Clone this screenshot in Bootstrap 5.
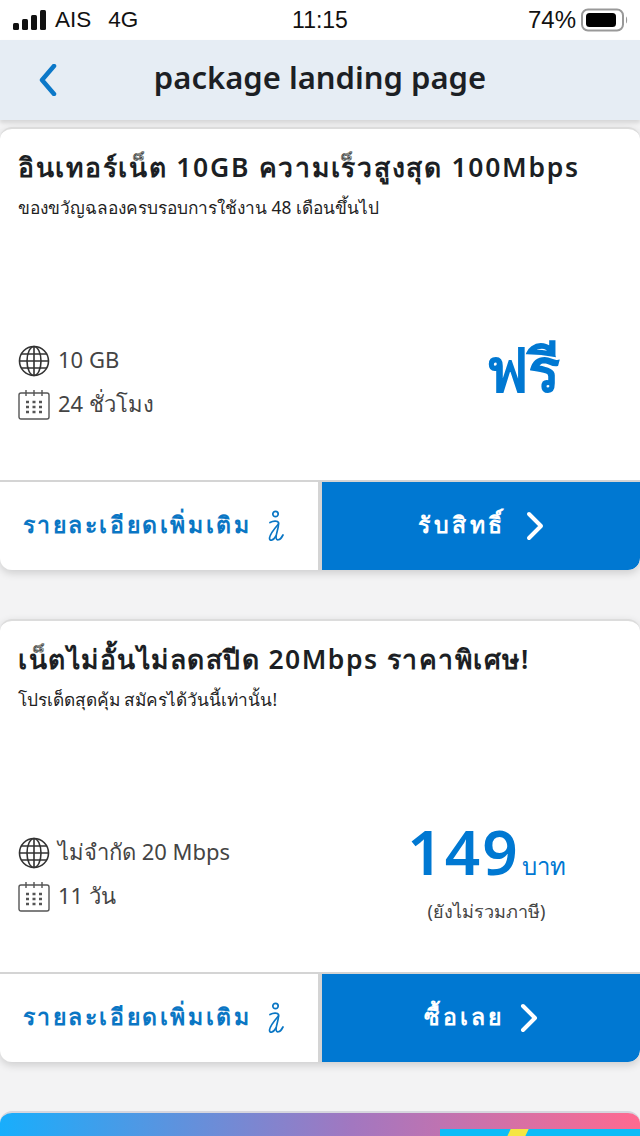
<!DOCTYPE html>
<html lang="th">
<head>
<meta charset="utf-8">
<title>package landing page</title>
<link rel="stylesheet" href="https://cdn.jsdelivr.net/npm/bootstrap@5.3.0/dist/css/bootstrap.min.css">
<style>
html,body{height:1136px;overflow:hidden}
body{background:#f3f3f4;font-family:"Noto Sans","Liberation Sans",sans-serif;color:#3c3c3c}
.status-bar{height:40px;background:#fff;padding:0 12px 0 13px;color:#111;font-family:"Liberation Sans",sans-serif;font-size:22.500px;position:relative}
.status-carrier{margin-left:9px}
.status-net{margin-left:17px}
.status-pct{font-size:24px;margin-right:5px;position:relative}
.status-time{position:absolute;left:0;right:0;top:0;height:40px;line-height:40px;text-align:center;font-weight:500;font-size:23px}
.head-bar{height:80px;background:#e6edf4;position:relative;box-shadow:0 3px 4px rgba(0,0,0,.12)}
.head-title{font-size:31px;font-weight:600;color:#1c1f24;line-height:70px;text-align:center;margin:0 0 6px;width:100%}
.head-back{position:absolute;left:38px;top:24px}
.pk-list{padding-top:7px;display:flex;flex-direction:column;gap:49px}
.pk-card{height:443px;background:#fff;border:0;border-top:2px solid #dcdcdc;border-radius:12px;box-shadow:0 3px 8px rgba(0,0,0,.16);overflow:hidden;display:flex;flex-direction:column}
.pk-body{flex:1;padding:18px 18px 0;position:relative;display:flex;flex-direction:column;min-height:0}
.pk-title{font-size:26.500px;font-weight:600;color:#1c1f24;letter-spacing:1.500px;line-height:40px;margin:0;white-space:nowrap}
.pk-title-wide{letter-spacing:1.730px}
.pk-sub{font-size:17.300px;line-height:24px;margin:9px 0 0;color:#222;white-space:nowrap}
.pk-info{flex:1;display:flex;align-items:flex-start;min-height:0;padding-top:117px}
.pk-specs{width:345px;font-size:22px;color:#444;line-height:44px;flex:none}
.pk-spec{height:44px}
.pk-spec svg{margin-top:4px}
.pk-price{flex:1;text-align:center;color:#0078d2}
.pk-price-free{padding-left:60px;margin-top:-3px;font-size:60px;font-weight:600;line-height:70px}
.pk-price-paid{margin-top:-13px;padding-right:12px}
.pk-num{font-size:62px;font-weight:600;letter-spacing:2px;line-height:70px}
.pk-unit{font-size:24px;font-weight:500;margin-left:-2px}
.pk-note{font-size:18px;color:#444;line-height:26px;margin-top:12px}
.pk-foot{height:90px;display:flex;background:#d4d4d4;padding-top:2px;gap:4px;flex:none}
.pk-btn{width:318px;flex:none;border:0;border-radius:0;font-size:23px;font-weight:600;letter-spacing:2.600px;display:flex;align-items:center;justify-content:center;padding:0 0 4px}
.pk-btn svg{position:relative;top:2px}
.pk-more{background:#fff;color:#0a76c4;gap:14px;padding-right:12px}
.pk-go{flex:1;width:auto;background:#0078d2;color:#fff;gap:20px;border-bottom-right-radius:12px}
.pk-go-wide{letter-spacing:3.600px}
.pk-go-tight{letter-spacing:3px;gap:16px}
.promo{height:60px;border-radius:12px 12px 0 0;background:linear-gradient(90deg,#18aefc,#a277c0 55%,#ff6a90);border-top:2px solid #d6d6de;position:relative;overflow:hidden}
.promo-tile{position:absolute;left:440px;right:0;top:16px;bottom:0;background:#0dbcf7}
.promo-bolt{position:absolute;left:506px;top:16px;width:18px;height:20px;background:#f5e642;transform:skewX(-25deg)}
</style>
</head>
<body>
<div class="status-bar d-flex align-items-center">
  <svg width="33" height="20" viewBox="0 0 33 20"><g fill="#111"><rect x="0" y="13" width="6" height="7" rx="1.5"/><rect x="9" y="9" width="6" height="11" rx="1.5"/><rect x="18" y="5" width="6" height="15" rx="1.5"/><rect x="27" y="0" width="6" height="20" rx="1.5"/></g></svg>
  <span class="status-carrier">AIS</span><span class="status-net">4G</span>
  <div class="status-time">11:15</div>
  <span class="ms-auto status-pct">74%</span>
  <svg width="47" height="24" viewBox="0 0 47 24" class="position-relative"><rect x="1" y="1.500" width="41" height="21" rx="6" fill="none" stroke="#999" stroke-width="2"/><rect x="5" y="5" width="30" height="14" rx="3.500" fill="#000"/><path d="M45 8.500c1.500.8 1.500 6.200 0 7z" fill="#999"/></svg>
</div>
<div class="head-bar d-flex align-items-center">
  <svg class="head-back" width="20" height="32" viewBox="0 0 20 32"><path d="M16 2 4 16l12 14" fill="none" stroke="#0c78c8" stroke-width="4.500" stroke-linecap="round" stroke-linejoin="round"/></svg>
  <h1 class="head-title">package landing page</h1>
</div>
<div class="pk-list">
  <div class="pk-card">
    <div class="pk-body">
      <h2 class="pk-title pk-title-wide">อินเทอร์เน็ต 10GB ความเร็วสูงสุด 100Mbps</h2>
      <p class="pk-sub">ของขวัญฉลองครบรอบการใช้งาน 48 เดือนขึ้นไป</p>
      <div class="pk-info">
        <div class="pk-specs">
          <div class="pk-spec d-flex align-items-center gap-2">
            <svg width="32" height="32" viewBox="0 0 32 32" fill="none" stroke="#333" stroke-width="1.600"><circle cx="16" cy="16" r="14.500"/><ellipse cx="16" cy="16" rx="7" ry="14.500"/><path d="M16 1.500v29M1.500 16h29M3.500 9h25M3.500 23h25"/></svg>
            <span>10 GB</span>
          </div>
          <div class="pk-spec d-flex align-items-center gap-2">
            <svg width="32" height="32" viewBox="0 0 32 32" fill="none" stroke="#555" stroke-width="1.400"><rect x="1" y="4" width="30" height="26" rx="2"/><path d="M8 1v6M16 1v6M24 1v6"/><path d="M8 13h3M14.500 13h3M21 13h3M8 18h3M14.500 18h3M21 18h3M8 23h3M14.500 23h3M21 23h3" stroke-width="2.600"/></svg>
            <span>24 ชั่วโมง</span>
          </div>
        </div>
        <div class="pk-price pk-price-free">ฟรี</div>
      </div>
    </div>
    <div class="pk-foot">
      <button class="btn pk-btn pk-more">รายละเอียดเพิ่มเติม
        <svg width="18" height="32" viewBox="0 0 18 32" fill="none" stroke="#0a76c4" stroke-width="1.700" stroke-linecap="round"><circle cx="9.500" cy="4" r="2.700"/><path d="M4 12.500C7 11 11.500 10.500 12.500 12.500c.5 4.500-2 9.500-2.500 14.500 0 4 4 4 7-2"/><path d="M12.500 14C9 18 4 24 3.500 28c0 3.500 3.500 3 6.500-2"/></svg>
      </button>
      <button class="btn pk-btn pk-go pk-go-wide">รับสิทธิ์
        <svg width="18" height="30" viewBox="0 0 18 30"><path d="M3 3l12 12L3 27" fill="none" stroke="#fff" stroke-width="4" stroke-linecap="round" stroke-linejoin="round"/></svg>
      </button>
    </div>
  </div>
  <div class="pk-card">
    <div class="pk-body">
      <h2 class="pk-title">เน็ตไม่อั้นไม่ลดสปีด 20Mbps ราคาพิเศษ!</h2>
      <p class="pk-sub">โปรเด็ดสุดคุ้ม สมัครได้วันนี้เท่านั้น!</p>
      <div class="pk-info">
        <div class="pk-specs">
          <div class="pk-spec d-flex align-items-center gap-2">
            <svg width="32" height="32" viewBox="0 0 32 32" fill="none" stroke="#333" stroke-width="1.600"><circle cx="16" cy="16" r="14.500"/><ellipse cx="16" cy="16" rx="7" ry="14.500"/><path d="M16 1.500v29M1.500 16h29M3.500 9h25M3.500 23h25"/></svg>
            <span>ไม่จำกัด 20 Mbps</span>
          </div>
          <div class="pk-spec d-flex align-items-center gap-2">
            <svg width="32" height="32" viewBox="0 0 32 32" fill="none" stroke="#555" stroke-width="1.400"><rect x="1" y="4" width="30" height="26" rx="2"/><path d="M8 1v6M16 1v6M24 1v6"/><path d="M8 13h3M14.500 13h3M21 13h3M8 18h3M14.500 18h3M21 18h3M8 23h3M14.500 23h3M21 23h3" stroke-width="2.600"/></svg>
            <span>11 วัน</span>
          </div>
        </div>
        <div class="pk-price pk-price-paid">
          <div><span class="pk-num">149</span> <span class="pk-unit">บาท</span></div>
          <div class="pk-note">(ยังไม่รวมภาษี)</div>
        </div>
      </div>
    </div>
    <div class="pk-foot">
      <button class="btn pk-btn pk-more">รายละเอียดเพิ่มเติม
        <svg width="18" height="32" viewBox="0 0 18 32" fill="none" stroke="#0a76c4" stroke-width="1.700" stroke-linecap="round"><circle cx="9.500" cy="4" r="2.700"/><path d="M4 12.500C7 11 11.500 10.500 12.500 12.500c.5 4.500-2 9.500-2.500 14.500 0 4 4 4 7-2"/><path d="M12.500 14C9 18 4 24 3.500 28c0 3.500 3.500 3 6.500-2"/></svg>
      </button>
      <button class="btn pk-btn pk-go pk-go-tight">ซื้อเลย
        <svg width="18" height="30" viewBox="0 0 18 30"><path d="M3 3l12 12L3 27" fill="none" stroke="#fff" stroke-width="4" stroke-linecap="round" stroke-linejoin="round"/></svg>
      </button>
    </div>
  </div>
  <div class="promo"><div class="promo-tile"></div><div class="promo-bolt"></div></div>
</div>
<script src="https://cdn.jsdelivr.net/npm/bootstrap@5.3.0/dist/js/bootstrap.bundle.min.js"></script>
</body>
</html>
